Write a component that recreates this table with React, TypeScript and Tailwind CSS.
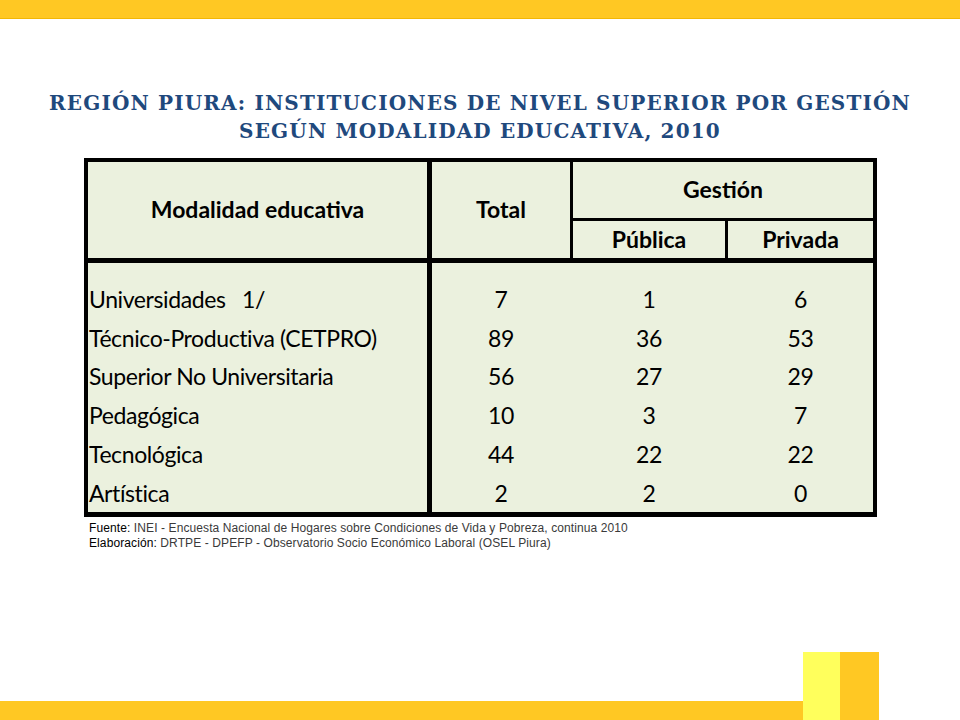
const rows = [
  { label: "Universidades\u00a0\u00a0\u00a01/", total: 7, pub: 1, priv: 6 },
  { label: "Técnico-Productiva (CETPRO)", total: 89, pub: 36, priv: 53 },
  { label: "Superior No Universitaria", total: 56, pub: 27, priv: 29 },
  { label: "Pedagógica", total: 10, pub: 3, priv: 7 },
  { label: "Tecnológica", total: 44, pub: 22, priv: 22 },
  { label: "Artística", total: 2, pub: 2, priv: 0 },
];

const App = () => {
  return (
    <div className="w-[960px] h-[720px] bg-white flex flex-col overflow-hidden">
      {/* Top band */}
      <div className="h-[19px] bg-[#ffc823] border-b border-[#f2b705]" />

      <div className="flex-1 flex flex-col">
        {/* Title */}
        <h1 className="pt-[70px] text-center text-[20px] leading-[28px] font-bold text-[#1f497d] tracking-[1.15px] font-['DejaVu_Serif',serif]">
          REGIÓN PIURA: INSTITUCIONES DE NIVEL SUPERIOR POR GESTIÓN
          <br />
          SEGÚN MODALIDAD EDUCATIVA, 2010
        </h1>

        {/* Table */}
        <div className="ml-[84px] mt-[13px] w-[793px] bg-[#ebf1de] border-black border-x-4 border-t-4 border-b-[5px] text-black font-['Lato',sans-serif]">
          <div className="flex h-[101px] border-b-[5px] border-black font-bold text-[23px]">
            <div className="w-[344px] border-r-[5px] border-black flex items-center justify-center pb-[2px]">
              Modalidad educativa
            </div>
            <div className="w-[141px] border-r-[3px] border-black flex items-center justify-center pb-[2px]">
              Total
            </div>
            <div className="flex-1 flex flex-col">
              <div className="h-[59px] border-b-[3px] border-black flex items-center justify-center pb-[2px]">
                Gestión
              </div>
              <div className="flex-1 flex">
                <div className="w-[155px] border-r-[3px] border-black flex items-center justify-center">
                  Pública
                </div>
                <div className="flex-1 flex items-center justify-center">Privada</div>
              </div>
            </div>
          </div>

          <div className="flex text-[23px] tracking-[-0.4px]">
            <div className="w-[344px] border-r-[5px] border-black pt-[17px] pl-[1px]">
              {rows.map((r) => (
                <div key={r.label} className="h-[38.7px] flex items-center whitespace-nowrap">
                  {r.label}
                </div>
              ))}
            </div>
            <div className="flex-1 pt-[17px]">
              {rows.map((r) => (
                <div key={r.label} className="h-[38.7px] flex items-center">
                  <div className="w-[138px] text-center">{r.total}</div>
                  <div className="w-[158px] text-center">{r.pub}</div>
                  <div className="flex-1 text-center">{r.priv}</div>
                </div>
              ))}
            </div>
          </div>
        </div>

        {/* Notes */}
        <div className="ml-[89px] mt-[4px] text-[12px] leading-[15px] tracking-[0.1px] text-[#3a3a3a] font-['Liberation_Sans',sans-serif]">
          <p>
            <span className="text-black">Fuente:</span> INEI - Encuesta Nacional de Hogares sobre Condiciones de Vida y Pobreza, continua 2010
          </p>
          <p>
            <span className="text-black">Elaboración:</span> DRTPE - DPEFP - Observatorio Socio Económico Laboral (OSEL Piura)
          </p>
        </div>
      </div>

      {/* Bottom band */}
      <div className="flex items-end h-[68px]">
        <div className="flex-1 h-[19px] bg-[#ffc823]" />
        <div className="w-[37px] h-full bg-[#ffff5c]" />
        <div className="w-[39px] h-full bg-[#ffc823]" />
        <div className="w-[81px]" />
      </div>
    </div>
  );
};

export default App;
